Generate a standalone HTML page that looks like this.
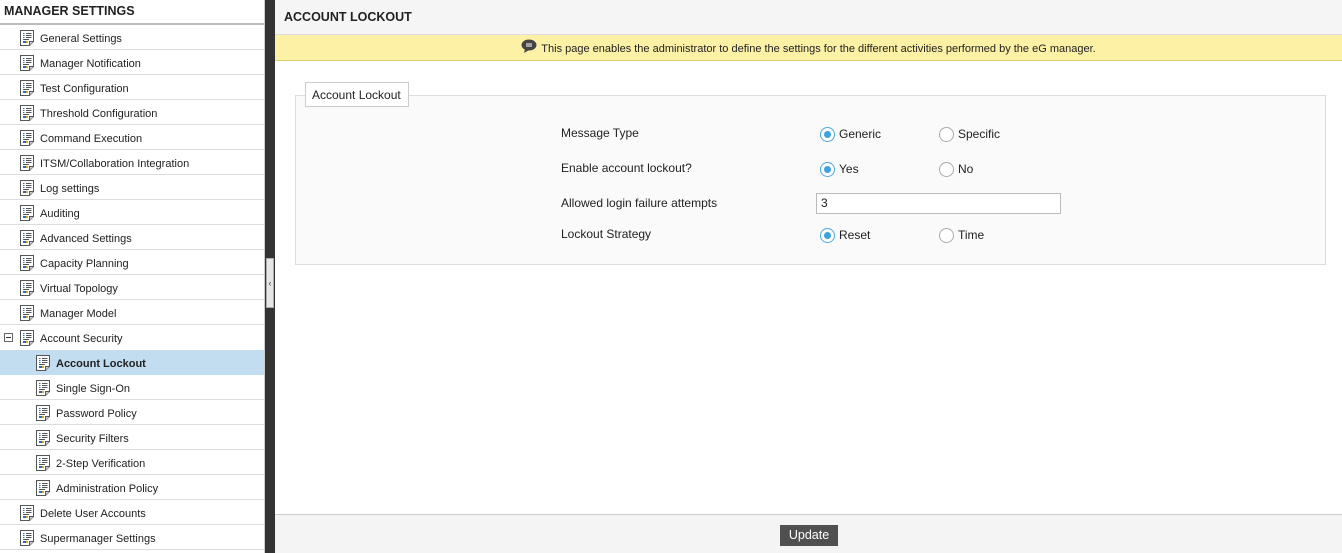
<!DOCTYPE html>
<html><head><style>
*{box-sizing:border-box;margin:0;padding:0}
body{width:1342px;height:553px;overflow:hidden;font-family:"Liberation Sans",Arial,sans-serif;font-size:12px;color:#222;background:#fff;position:relative}
#side{position:absolute;left:0;top:0;width:265px;height:553px;background:#fff;border-right:1px solid #ccc}
#side .h{height:25px;line-height:22px;padding-left:4px;font-weight:bold;font-size:12.5px;border-bottom:2px solid #bbb;color:#222}
.r{height:25px;line-height:24px;padding-top:2px;border-bottom:1px solid #ddd;position:relative;padding-left:40px;font-size:11px;white-space:nowrap}
.r.s{padding-left:56px}
.r.sel{background:#c2dcf0;font-weight:bold}
.ic{position:absolute;top:5px;left:20px;width:15px;height:16px}
.r.s .ic{left:36px}
.pm{position:absolute;left:4px;top:8px;width:9px;height:9px;border:1px solid #666;}
.pm:after{content:"";position:absolute;left:1px;top:3px;width:5px;height:1px;background:#333}
#bar{position:absolute;left:265px;top:0;width:10px;height:553px;background:#333}
#grip{position:absolute;left:266px;top:258px;width:8px;height:50px;background:#e6e6e6;border:1px solid #aaa;font-size:9px;line-height:48px;text-align:center;color:#333}
#main{position:absolute;left:275px;top:0;right:0;height:553px}
#th{height:35px;background:#f5f5f5;font-weight:bold;font-size:12.5px;line-height:35px;padding-left:9px;border-bottom:1px solid #ddd}
#info{height:26px;background:#fdf1a6;border-bottom:1px solid #e0d070;text-align:center;font-size:11px;line-height:28px}
#fs{position:absolute;left:20px;top:95px;width:1031px;height:170px;background:#fafafa;border:1px solid #ddd}
#lg{position:absolute;left:30px;top:82px;width:104px;height:25px;background:#fff;border:1px solid #ccc;font-size:12px;line-height:24px;padding-left:6px}
.lab{position:absolute;left:286px;font-size:12px}
.rad{position:absolute;font-size:12px;padding-left:19px;line-height:15px}
.rad:before{content:"";position:absolute;left:0;top:0;width:13px;height:13px;border:1px solid #aaa;border-radius:50%;background:#fff}
.rad.on:before{border-color:#4aa8dc}
.rad.on:after{content:"";position:absolute;left:4px;top:4px;width:7px;height:7px;border-radius:50%;background:#3ea3dd}
#inp{position:absolute;left:541px;top:193px;width:245px;height:21px;border:1px solid #bbb;background:#fff;font-size:12px;line-height:19px;padding-left:4px}
#ft{position:absolute;left:0;right:0;top:514px;height:39px;background:#f4f4f4;border-top:1px solid #ccc}
#btn{position:absolute;left:505px;top:10px;width:58px;height:21px;background:#505050;color:#fff;font-size:12.5px;text-align:center;line-height:21px}
</style></head><body>
<svg width="0" height="0" style="position:absolute"><defs><symbol id="d" viewBox="0 0 15 16"><path d="M.5.5h13v11l-4 4h-9z" fill="#fff" stroke="#555"/><path d="M9.5 15.5v-4h4" fill="#ccc" stroke="#555"/><path d="M3 3.5h1.5M3 5.5h1.5M3 7.5h1.5" stroke="#2a6bb8"/><path d="M6 3.5h5.5M6 5.5h5.5M6 7.5h5.5M3 9.5h6" stroke="#555"/><rect x="3" y="11" width="3" height="2" fill="#2a6bb8"/><rect x="6" y="11" width="2" height="2" fill="#e8a21a"/></symbol></defs></svg>
<div id="side">
<div class="h">MANAGER SETTINGS</div>
<div class="r"><svg class="ic"><use href="#d"/></svg>General Settings</div>
<div class="r"><svg class="ic"><use href="#d"/></svg>Manager Notification</div>
<div class="r"><svg class="ic"><use href="#d"/></svg>Test Configuration</div>
<div class="r"><svg class="ic"><use href="#d"/></svg>Threshold Configuration</div>
<div class="r"><svg class="ic"><use href="#d"/></svg>Command Execution</div>
<div class="r"><svg class="ic"><use href="#d"/></svg>ITSM/Collaboration Integration</div>
<div class="r"><svg class="ic"><use href="#d"/></svg>Log settings</div>
<div class="r"><svg class="ic"><use href="#d"/></svg>Auditing</div>
<div class="r"><svg class="ic"><use href="#d"/></svg>Advanced Settings</div>
<div class="r"><svg class="ic"><use href="#d"/></svg>Capacity Planning</div>
<div class="r"><svg class="ic"><use href="#d"/></svg>Virtual Topology</div>
<div class="r"><svg class="ic"><use href="#d"/></svg>Manager Model</div>
<div class="r" style="border-bottom:none"><span class="pm"></span><svg class="ic"><use href="#d"/></svg>Account Security</div>
<div class="r s sel" style="border-bottom:none"><svg class="ic"><use href="#d"/></svg>Account Lockout</div>
<div class="r s"><svg class="ic"><use href="#d"/></svg>Single Sign-On</div>
<div class="r s"><svg class="ic"><use href="#d"/></svg>Password Policy</div>
<div class="r s"><svg class="ic"><use href="#d"/></svg>Security Filters</div>
<div class="r s"><svg class="ic"><use href="#d"/></svg>2-Step Verification</div>
<div class="r s"><svg class="ic"><use href="#d"/></svg>Administration Policy</div>
<div class="r"><svg class="ic"><use href="#d"/></svg>Delete User Accounts</div>
<div class="r"><svg class="ic"><use href="#d"/></svg>Supermanager Settings</div>
</div>
<div id="bar"></div><div id="grip">‹</div>
<div id="main">
<div id="th">ACCOUNT LOCKOUT</div>
<div id="info"><svg width="16" height="14" style="vertical-align:-1px;margin-right:4px" viewBox="0 0 16 14"><ellipse cx="8" cy="6" rx="7.5" ry="5.5" fill="#444"/><path d="M4 10l-1 4 5-3z" fill="#444"/><path d="M5 5h6M5 7h6" stroke="#fff"/></svg>This page enables the administrator to define the settings for the different activities performed by the eG manager.</div>
<div id="fs"></div>
<div id="lg">Account Lockout</div>
<div class="lab" style="top:126px">Message Type</div>
<div class="rad on" style="left:545px;top:127px">Generic</div>
<div class="rad" style="left:664px;top:127px">Specific</div>
<div class="lab" style="top:161px">Enable account lockout?</div>
<div class="rad on" style="left:545px;top:162px">Yes</div>
<div class="rad" style="left:664px;top:162px">No</div>
<div class="lab" style="top:196px">Allowed login failure attempts</div>
<div id="inp">3</div>
<div class="lab" style="top:227px">Lockout Strategy</div>
<div class="rad on" style="left:545px;top:228px">Reset</div>
<div class="rad" style="left:664px;top:228px">Time</div>
<div id="ft"><div id="btn">Update</div></div>
</div>
</body></html>
